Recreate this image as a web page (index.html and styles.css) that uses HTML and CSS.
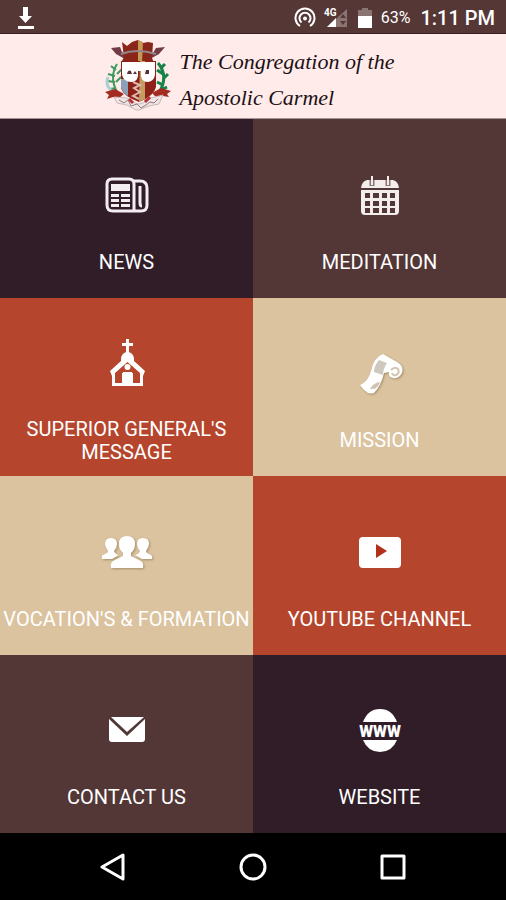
FILE: index.html
```html
<!DOCTYPE html>
<html lang="en">
<head>
<meta charset="utf-8">
<meta name="viewport" content="width=device-width, initial-scale=1">
<title>The Congregation of the Apostolic Carmel</title>
<link rel="stylesheet" href="styles.css">
</head>
<body>
<div class="status">
  <svg class="download" width="18" height="24" viewBox="0 0 18 24" fill="#fff" aria-hidden="true"><path d="M6 1h5v9h4l-6.500 7L2 10h4zM1 20h16v3H1z"/></svg>
  <svg width="22" height="22" viewBox="0 0 22 22" fill="none" stroke="#fff" stroke-width="2" aria-hidden="true"><path d="M6 19a9.500 9.500 0 1 1 10 0M7.500 15.500a5.500 5.500 0 1 1 7 0"/><circle cx="11" cy="11.500" r="2" fill="#fff" stroke="none"/></svg>
  <svg class="signal" width="24" height="22" viewBox="0 0 24 22" aria-hidden="true"><path d="M23 2v18H3z" fill="#8b7573"/><path d="M12 11v9H3z" fill="#fff"/><text class="network" x="0" y="9">4G</text><path d="M16 11l3-4 3 4zM16 14h6l-3 4z" fill="#553736"/></svg>
  <svg class="battery" width="14" height="20" viewBox="0 0 14 20" aria-hidden="true"><path d="M4 0h6v2h4v7H0V2h4z" fill="#8b7573"/><path d="M0 8h14v12H0z" fill="#fff"/></svg>
  <span class="percent">63%</span>
  <span class="time">1:11 PM</span>
</div>
<header class="header">
  <svg class="crest" width="68" height="72" viewBox="0 0 68 72" aria-hidden="true">
    <g fill="none" stroke="#3d9a5d" stroke-width="2"><path d="M13 24Q5 37 13 52M12 30l-5-4m4 10l-7-2m7 8l-8-1m9 7l-6 1M13 34l5-5m-6 13l5-5"/><path stroke="#148345" stroke-width="3" d="M54 23Q65 36 55 53M57 28l4-4m-2 10l-6-4m6 9l5-5m-5 11l-6-3m4 8l6-3"/></g>
    <path d="M4 37q-3 8 3 13" fill="none" stroke="#a9cfd0" stroke-width="3"/>
    <path d="M7 8l9-1 2 5 7 3-4 4-9-5zM61 7l-9 1-3 5-7 2 4 4 9-5z" fill="#733b43"/>
    <path d="M18 2l5 4 5-4 6-2 5 3 5-1 5 1-1 15 2 5H17l3-6z" fill="#892519"/>
    <path d="M34 0l5 2-1 21h-4z" fill="#c49855"/>
    <path d="M17 14q16-6 35 0" fill="none" stroke="#92858b" stroke-width="2"/>
    <path d="M17 21h35v26q-2 9-17 15Q19 56 17 48z" fill="#8d2117"/>
    <path d="M17 39h7v17q-6-4-7-9z" fill="#8ba0b9"/><path d="M36 21h5v38l-6 3z" fill="#c39c60"/>
    <path d="M18 22h33v13q-1 6-7 7-6 0-7-6v-5h-3v5q-1 6-7 6-7 0-9-7z" fill="#fff"/>
    <path d="M23 34q1-5 4-3l1 3zm8-3l2 3h-4zm11-1h3v4h-4z" fill="#553338"/>
    <path d="M29 42l7 3-6 3 6 4-7 4 6 3" fill="none" stroke="#dfb7ae" stroke-width="2"/>
    <path d="M1 52l10-3 9 5-5 4-6-1-6 2 2-4zM67 51l-10-3-9 5 5 5 6-2 6 1-2-3z" fill="#a32b22"/>
    <path d="M10 57l13 1 8 5q4 2 8 0l8-5 12-3-4 9-10 2-10 4H32l-9-5-10-2z" fill="#eee5e4" stroke="#cbb9ba"/>
    <path d="M15 60l5 3 4-3 3 6 6-2 4 4 5-3 4-3 4 1 4-4" fill="none" stroke="#987980" stroke-width="1"/>
    <path d="M25 59l4 4m17-6l-5 5" stroke="#b53037" stroke-width="3"/>
  </svg>
  <h1 class="title">The Congregation of the<br>Apostolic Carmel</h1>
</header>
<main class="grid">
  <a class="tile plum" href="#news">
    <svg class="icon" width="48" height="48" viewBox="0 0 48 48" fill="none" stroke="#f3edf1" stroke-width="3" aria-hidden="true"><path d="M31 9h6q7 0 7 7v17q0 6-6 6H10q-6 0-6-6V12q0-5 5-5h17q5 0 5 5v26M37 14v17q0 3 2 3"/><path d="M8 12h19v7H8zM8 22h8v3H8zm10 0h9v3h-9zM8 27h8v3H8zm10 0h9v3h-9zM8 32h8v3H8zm10 0h9v3h-9z" fill="#f3edf1" stroke="none"/></svg>
    <span class="label">NEWS</span>
  </a>
  <a class="tile brown" href="#meditation">
    <svg class="icon" width="48" height="48" viewBox="0 0 48 48" aria-hidden="true"><path fill="#f3edec" fill-rule="evenodd" d="M11 8h26q5 1 6 8H5q1-7 6-8zM5 18h38v21q0 4-4 4H9q-4 0-4-4zm4 3v5h5v-5zm8 0v5h6v-5zm9 0v5h5v-5zm8 0v5h5v-5zM9 29v5h5v-5zm8 0v5h6v-5zm9 0v5h5v-5zm8 0v5h5v-5zM9 36v5h5v-5zm8 0v5h6v-5zm9 0v5h5v-5zm8 0v5h5v-5z"/><path d="M16 8v6m16-6v6" stroke="#8a7474" stroke-width="5"/><path d="M16 4v9m16-9v9" stroke="#f3edec" stroke-width="2"/></svg>
    <span class="label">MEDITATION</span>
  </a>
  <a class="tile rust" href="#message">
    <svg class="icon" width="48" height="48" viewBox="0 0 48 48" aria-hidden="true"><path fill="#fff" fill-rule="evenodd" d="M23 0h3v4h4v3h-4v6q5 2 5 7v2l11 10-2 5v10H9V37l-2-5 11-10v-2q0-5 5-7V7h-4V4h4zM12 34v10h7V34h11v10h7V34L24.500 23z"/><circle cx="24.500" cy="28" r="3" fill="#fff"/><path d="M20 33h9v11h-9z" fill="#fff"/></svg>
    <span class="label">SUPERIOR GENERAL'S<br>MESSAGE</span>
  </a>
  <a class="tile sand" href="#mission">
    <svg class="icon shadow" width="48" height="48" viewBox="0 0 48 48" aria-hidden="true"><path d="M4 35q8-3 11-14 3-14 12-17l14 8q7 4 5 11-3 6-9 5-5-1-4-6l-5 1q-3 13-10 20-5 2-10-3z" fill="#fff"/><path d="M23 10l8 3q-4 6-4 12l-9-3q0-6 5-12z" fill="#cfc8be"/><path d="M14 39q3-6 10-7-2 8-10 7z" fill="#cfc4b4"/><path d="M35 20q4-4 7-1 2 4-2 6-3 1-4-2" fill="none" stroke="#d3c5b0" stroke-width="2"/></svg>
    <span class="label">MISSION</span>
  </a>
  <a class="tile sand" href="#vocations">
    <svg class="icon shadow" width="50" height="48" viewBox="0 0 50 48" fill="#fff" aria-hidden="true"><path d="M25 7q8 0 8 8 0 6-4 9v3l10 5q3 2 2 7H9q-1-5 2-7l10-5v-3q-4-3-4-9 0-8 8-8zM9 9q6 0 6 6 0 4-3 7 1 3 5 4l-7 4H0q-1-4 3-5 3-1 3-3-3-4-3-7 0-6 6-6zM41 9q-6 0-6 6 0 4 3 7-1 3-5 4l7 4h10q1-4-3-5-3-1-3-3 3-4 3-7 0-6-6-6z"/></svg>
    <span class="label">VOCATION'S &amp; FORMATION</span>
  </a>
  <a class="tile rust" href="#youtube">
    <svg class="icon" width="48" height="48" viewBox="0 0 48 48" aria-hidden="true"><rect x="3" y="8" width="42" height="31" rx="4" fill="#fff"/><path d="M20 15l11 7-11 7z" fill="#b3301b"/></svg>
    <span class="label">YOUTUBE CHANNEL</span>
  </a>
  <a class="tile brown" href="#contact">
    <svg class="icon" width="48" height="48" viewBox="0 0 48 48" fill="#fff" aria-hidden="true"><path d="M8 10h33L24 25z"/><path d="M6 12l18 17 18-17v20q0 3-3 3H9q-3 0-3-3z"/></svg>
    <span class="label">CONTACT US</span>
  </a>
  <a class="tile plum" href="#website">
    <svg class="icon" width="48" height="48" viewBox="0 0 48 48" fill="#fff" aria-hidden="true"><path d="M7 15q5-13 17-13t17 13zM7 33q5 12 17 12t17-12z"/><text class="www" x="24" y="30" text-anchor="middle">WWW</text></svg>
    <span class="label">WEBSITE</span>
  </a>
</main>
<nav class="nav" aria-label="System">
  <button class="key" aria-label="Back"><svg width="28" height="28" viewBox="0 0 28 28" aria-hidden="true"><path d="M24 2v24L3 14z"/></svg></button>
  <button class="key" aria-label="Home"><svg width="28" height="28" viewBox="0 0 28 28" aria-hidden="true"><circle cx="14" cy="14" r="12"/></svg></button>
  <button class="key" aria-label="Recent apps"><svg width="28" height="28" viewBox="0 0 28 28" aria-hidden="true"><path d="M3 3h22v22H3z"/></svg></button>
</nav>
</body>
</html>
```
FILE: styles.css
```css
* { box-sizing: border-box; }

body {
  margin: 0;
  min-height: 100vh;
  display: flex;
  flex-direction: column;
  background: #000;
  color: #fff;
  font-family: Roboto, "Liberation Sans", sans-serif;
}

.status {
  display: flex;
  align-items: center;
  height: 34px;
  padding: 2px 11px 0 17px;
  background: #553736;
  border-bottom: 1px solid #3c1d22;
}

.download { margin-right: auto; }
.signal { margin-left: 8px; }
.battery { margin-left: 10px; }
.network { fill: #fff; font-size: 10px; font-weight: 700; }
.percent { margin-left: 9px; font-size: 16px; }
.time { margin-left: 10px; font-size: 20px; font-weight: 500; }

.header {
  display: flex;
  align-items: center;
  justify-content: center;
  gap: 8px;
  padding: 0 8px 0 0;
  height: 85px;
  background: #ffebea;
  border-bottom: 1px solid #a59495;
}

.title {
  margin: 0;
  padding-top: 8px;
  color: #1c1014;
  font-family: "Liberation Serif", serif;
  font-size: 22px;
  font-style: italic;
  font-weight: 400;
  line-height: 36px;
}

.grid {
  flex: 1;
  display: grid;
  grid-template-columns: 1fr 1fr;
  grid-auto-rows: 1fr;
}

.tile {
  display: flex;
  flex-direction: column;
  align-items: center;
  justify-content: center;
  color: #fff;
  text-align: center;
  text-decoration: none;
}

.plum { background: #301d28; }
.brown { background: #533636; }
.rust { background: #b5462d; }
.sand { background: #dbc39f; }

.icon { margin: 29px 0 31px; overflow: visible; }
.shadow { filter: drop-shadow(1px 1px 1px #a58d6b); }
.www { font-size: 16px; font-weight: 900; }
.label { font-size: 20px; line-height: 23px; }

.nav {
  display: flex;
  align-items: center;
  justify-content: center;
  gap: 100px;
  height: 67px;
}

.key {
  display: flex;
  padding: 6px;
  border: 0;
  background: none;
}

.key svg {
  fill: none;
  stroke: #fff;
  stroke-width: 3;
  stroke-linejoin: round;
}
```
